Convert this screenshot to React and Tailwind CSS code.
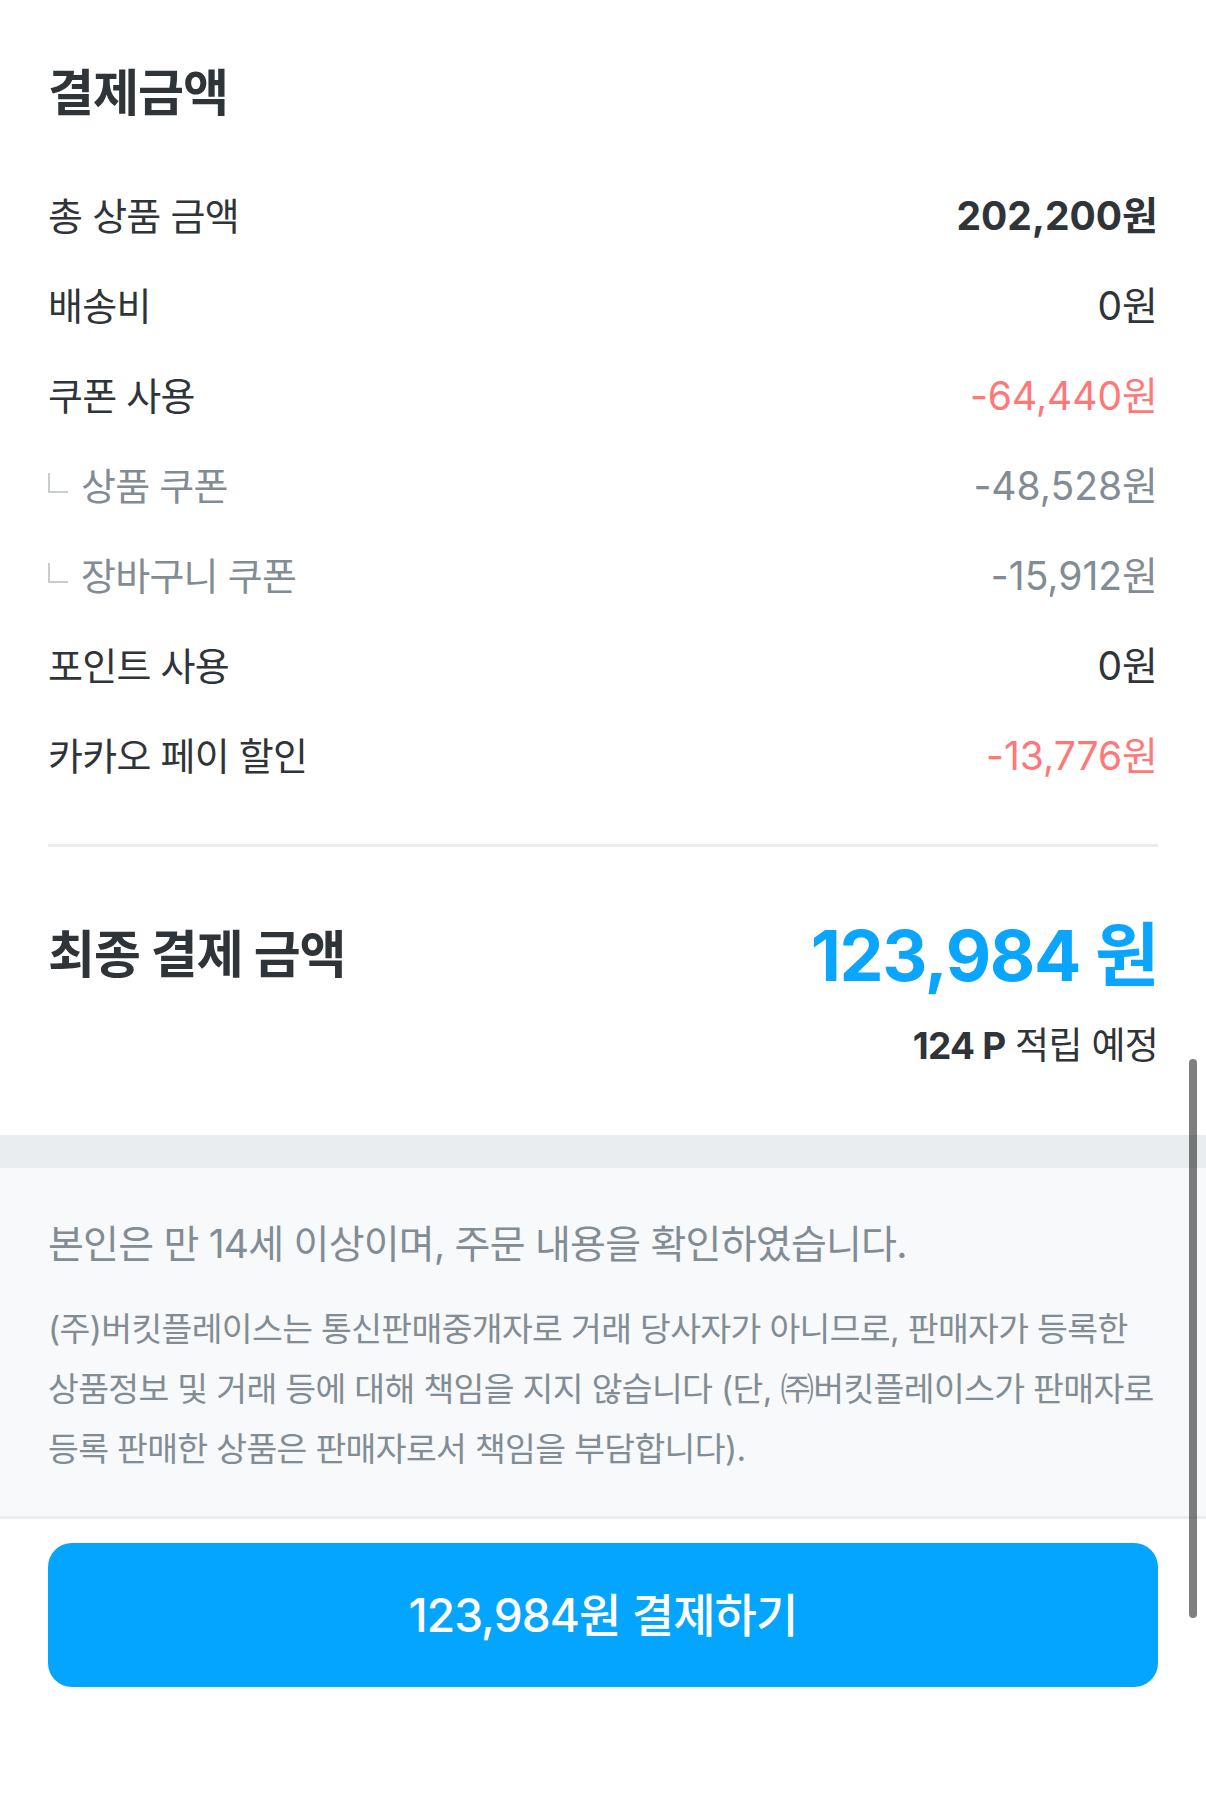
const rows = [
  { label: "총 상품 금액", value: "202,200원", tone: "bold" },
  { label: "배송비", value: "0원" },
  { label: "쿠폰 사용", value: "-64,440원", tone: "red" },
  { label: "상품 쿠폰", value: "-48,528원", sub: true },
  { label: "장바구니 쿠폰", value: "-15,912원", sub: true },
  { label: "포인트 사용", value: "0원" },
  { label: "카카오 페이 할인", value: "-13,776원", tone: "red" },
];

function PriceRow({ label, value, tone, sub }) {
  const valueClass =
    tone === "bold"
      ? "font-bold text-[#2f3438]"
      : tone === "red"
      ? "text-[#ff7777]"
      : sub
      ? "text-[#828c94]"
      : "text-[#2f3438]";

  return (
    <div className="flex h-[90px] items-center justify-between">
      <div className="flex items-center">
        {sub && (
          <span className="mr-[13px] mt-[-6px] h-[20px] w-[20px] border-b-2 border-l-2 border-[#c8cdd1]"></span>
        )}
        <span
          className={`text-[38px] tracking-[-0.02em] ${
            sub ? "text-[#828c94]" : "text-[#2f3438]"
          }`}
        >
          {label}
        </span>
      </div>
      <span className={`text-[39px] ${valueClass}`}>{value}</span>
    </div>
  );
}

export default function App() {
  return (
    <div className="relative min-h-[1814px] w-full bg-white font-[Inter,'Noto_Sans_CJK_KR',sans-serif]">
      <div className="px-[48px] pb-[69px] pt-[65px]">
        <h2 className="text-[50px] font-bold leading-[56px] tracking-[-0.02em] text-[#2f3438]">
          결제금액
        </h2>

        <div className="mt-[50px]">
          {rows.map((row) => (
            <PriceRow key={row.label} {...row} />
          ))}
        </div>

        <div className="mt-[43px] h-[3px] bg-[#eaedef]"></div>

        <div className="mt-[63px] flex h-[90px] items-center justify-between">
          <span className="text-[51px] font-bold tracking-[-0.02em] text-[#2f3438]">
            최종 결제 금액
          </span>
          <span className="text-[70px] font-bold tracking-[-0.02em] text-[#0aa5ff]">
            123,984 원
          </span>
        </div>

        <div className="mt-[26px] text-right text-[37px] leading-[40px] tracking-[-0.02em] text-[#2f3438]">
          <span className="font-bold">124 P</span> 적립 예정
        </div>
      </div>

      <div className="h-[33px] bg-[#eaedef]"></div>

      <div className="border-b-[3px] border-[#eaedef] bg-[#f7f9fa] px-[48px] pb-[37px] pt-[51px] text-[#828c94]">
        <p className="text-[39px] leading-[50px] tracking-[-0.02em]">
          본인은 만 14세 이상이며, 주문 내용을 확인하였습니다.
        </p>
        <p className="mt-[30px] whitespace-nowrap text-[33.5px] leading-[60px] tracking-[-0.02em]">
          (주)버킷플레이스는 통신판매중개자로 거래 당사자가 아니므로, 판매자가 등록한
          <br />
          상품정보 및 거래 등에 대해 책임을 지지 않습니다 (단, ㈜버킷플레이스가 판매자로
          <br />
          등록 판매한 상품은 판매자로서 책임을 부담합니다).
        </p>
      </div>

      <div className="px-[48px] pb-[127px] pt-[24px]">
        <button className="flex h-[144px] w-full items-center justify-center rounded-[24px] bg-[#03a5ff] text-[46px] font-medium tracking-[-0.02em] text-white">
          123,984원 결제하기
        </button>
      </div>

      <div className="absolute right-[9px] top-[1059px] h-[559px] w-[8px] rounded-full bg-black/50"></div>
    </div>
  );
}
